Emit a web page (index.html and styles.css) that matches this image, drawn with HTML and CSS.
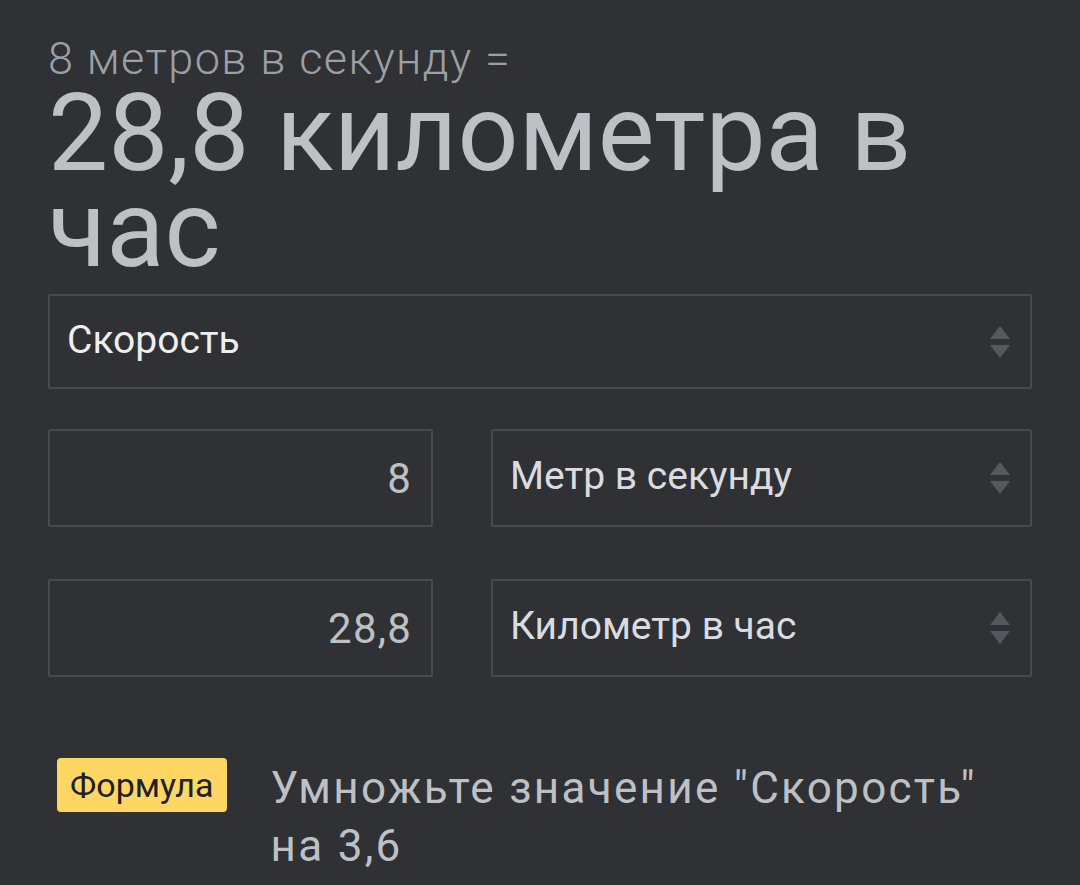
FILE: index.html
```html
<!DOCTYPE html>
<html lang="ru">
<head>
    <meta charset="UTF-8">
    <title>Конвертер</title>
    <link rel="stylesheet" href="styles.css">
</head>
<body>
<div id="page">
    <div class="query">8 метров в секунду =</div>
    <div class="answer">28,8 километра в час</div>

    <div class="select wide">
        <span>Скорость</span>
        <svg class="updown" viewBox="0 0 24 36"><path d="M12 2 L22 15 H2 Z M2 21 H22 L12 34 Z"/></svg>
    </div>

    <div class="row">
        <div class="field">8</div>
        <div class="select">
            <span>Метр в секунду</span>
            <svg class="updown" viewBox="0 0 24 36"><path d="M12 2 L22 15 H2 Z M2 21 H22 L12 34 Z"/></svg>
        </div>
    </div>
    <div class="row">
        <div class="field">28,8</div>
        <div class="select">
            <span>Километр в час</span>
            <svg class="updown" viewBox="0 0 24 36"><path d="M12 2 L22 15 H2 Z M2 21 H22 L12 34 Z"/></svg>
        </div>
    </div>

    <div class="formula">
        <span class="badge">Формула</span>
        <p>Умножьте значение "Скорость" на 3,6</p>
    </div>
</div>
</body>
</html>
```

FILE: styles.css
```css
*{
    margin: 0;
    padding: 0;
    box-sizing: border-box;
}
html,body{
    background: #303134;
    height: 100%;
    overflow: hidden;
}
body{
    font-family: Roboto, "Noto Sans", sans-serif;
    color: #bdc1c6;
}
#page{
    padding: 34px 48px 0 48px;
}
.query{
    font-size: 45px;
    font-weight: 300;
    letter-spacing: 1.4px;
    line-height: 50px;
    color: #9aa0a6;
}
.answer{
    font-size: 107px;
    line-height: 96px;
    margin-top: 2px;
}
.select{
    display: flex;
    align-items: center;
    justify-content: space-between;
    height: 98px;
    border: 2px solid #484a4e;
    border-radius: 2px;
    padding: 0 18px 0 17px;
    font-size: 39px;
    color: #dadce0;
}
.select.wide{
    margin-top: 16px;
    height: 95px;
    color: #eceef0;
}
.select span{
    margin-top: -4px;
}
.updown{
    width: 24px;
    height: 36px;
    fill: #55585c;
}
.row{
    display: flex;
    gap: 58px;
    margin-top: 40px;
}
.row + .row{
    margin-top: 52px;
}
.field{
    width: 385px;
    height: 98px;
    border: 2px solid #484a4e;
    border-radius: 2px;
    display: flex;
    align-items: center;
    justify-content: flex-end;
    padding-right: 19px;
    font-size: 42px;
    letter-spacing: 1.2px;
    color: #bdc1c6;
}
.row .select{
    flex: 1;
}
.formula{
    display: flex;
    align-items: flex-start;
    gap: 44px;
    margin-top: 81px;
    padding-left: 9px;
}
.badge{
    flex: none;
    background: #fdd663;
    color: #202124;
    border-radius: 4px;
    font-size: 34px;
    line-height: 54px;
    padding: 0 13px;
}
.formula p{
    max-width: 740px;
    font-size: 44px;
    letter-spacing: 2.3px;
    line-height: 58px;
    color: #bdc1c6;
    margin-top: 1px;
}
```
